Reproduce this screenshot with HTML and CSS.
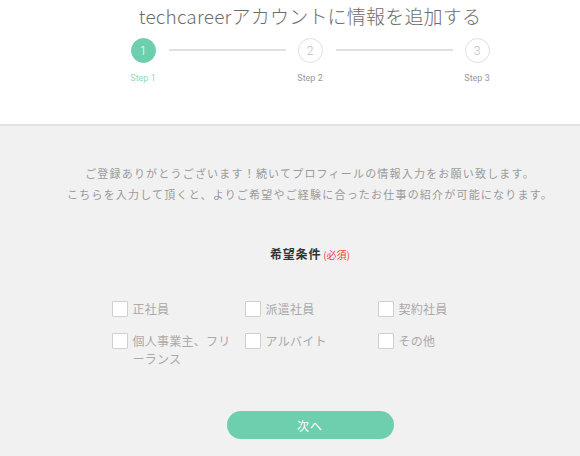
FILE: index.html
```html
<!DOCTYPE html>
<html lang="ja">
<head>
<meta charset="utf-8">
<title>techcareer</title>
<link rel="stylesheet" href="styles.css">
</head>
<body>
<header class="header">
  <h1 class="title">techcareerアカウントに情報を追加する</h1>
  <div class="steps">
    <div class="step is-active">
      <span class="step-circle">1</span>
      <span class="step-label">Step 1</span>
    </div>
    <span class="step-line"></span>
    <div class="step">
      <span class="step-circle">2</span>
      <span class="step-label">Step 2</span>
    </div>
    <span class="step-line"></span>
    <div class="step">
      <span class="step-circle">3</span>
      <span class="step-label">Step 3</span>
    </div>
  </div>
</header>
<main class="content">
  <p class="intro">ご登録ありがとうございます！続いてプロフィールの情報入力をお願い致します。<br>こちらを入力して頂くと、よりご希望やご経験に合ったお仕事の紹介が可能になります。</p>
  <h2 class="field-title">希望条件<span class="required">(必須)</span></h2>
  <div class="options">
    <label class="option"><span class="box"></span><span class="option-text">正社員</span></label>
    <label class="option"><span class="box"></span><span class="option-text">派遣社員</span></label>
    <label class="option"><span class="box"></span><span class="option-text">契約社員</span></label>
    <label class="option"><span class="box"></span><span class="option-text">個人事業主、フリーランス</span></label>
    <label class="option"><span class="box"></span><span class="option-text">アルバイト</span></label>
    <label class="option"><span class="box"></span><span class="option-text">その他</span></label>
  </div>
  <div class="actions">
    <button class="next" type="button">次へ</button>
  </div>
</main>
</body>
</html>
```
FILE: styles.css
```css
* { box-sizing: border-box; }
html, body {
  margin: 0;
  padding: 0;
  background: #f1f1f1;
  font-family: "Noto Sans CJK JP", "Noto Sans", sans-serif;
}
.header {
  background: #fff;
  height: 126px;
  border-bottom: 2px solid #e2e2e2;
  padding: 2px 0 0 40px;
}
.title {
  margin: 0;
  font-size: 19px;
  font-weight: 300;
  line-height: 28px;
  color: #6c6c6c;
  text-align: center;
  letter-spacing: 0.2px;
}
.steps {
  display: flex;
  align-items: flex-start;
  width: 359px;
  margin: 8px auto 0;
}
.step {
  display: flex;
  flex-direction: column;
  align-items: center;
  width: 25px;
}
.step-circle {
  width: 25px;
  height: 25px;
  border-radius: 50%;
  border: 1.5px solid #e0e0e0;
  background: #fff;
  color: #bbb;
  font-family: Roboto, "Noto Sans", sans-serif;
  font-weight: 300;
  font-size: 12px;
  display: flex;
  align-items: center;
  justify-content: center;
}
.step-label {
  margin-top: 10px;
  font-family: Roboto, "Noto Sans", sans-serif;
  font-size: 9px;
  line-height: 10px;
  color: #999;
  white-space: nowrap;
}
.is-active .step-circle {
  background: #6dcfae;
  border-color: #6dcfae;
  color: #fff;
}
.is-active .step-label { color: #8fd8bf; }
.step-line {
  flex: 1;
  height: 2px;
  background: #e0e0e0;
  margin: 11px 12px 0 13px;
}
.content {
  padding: 37px 0 0 40px;
}
.intro {
  margin: 0;
  text-align: center;
  font-size: 11px;
  line-height: 21px;
  letter-spacing: 1.2px;
  color: #9a9a9a;
}
.field-title {
  margin: 40px 0 0;
  text-align: center;
  font-size: 12px;
  line-height: 18px;
  font-weight: 700;
  color: #333;
  letter-spacing: 0.8px;
}
.required {
  font-size: 10px;
  font-weight: 400;
  color: #f04040;
  margin-left: 2px;
  letter-spacing: 0;
}
.options {
  display: grid;
  grid-template-columns: repeat(3, 133px);
  justify-content: center;
  row-gap: 14px;
  margin-top: 36px;
  padding-left: 2px;
}
.option {
  display: flex;
  align-items: flex-start;
  gap: 5px;
}
.box {
  flex: none;
  width: 16px;
  height: 16px;
  margin-top: 1px;
  background: #fff;
  border: 1px solid #cfcfcf;
  border-radius: 1px;
}
.option-text {
  max-width: 104px;
  font-size: 12px;
  line-height: 18px;
  letter-spacing: 0.25px;
  color: #aaa;
}
.actions {
  display: flex;
  justify-content: center;
  margin-top: 43px;
}
.next {
  width: 167px;
  height: 28px;
  border: none;
  border-radius: 14px;
  background: #6dcfae;
  color: #fff;
  font-family: "Noto Sans CJK JP", sans-serif;
  font-size: 12px;
  letter-spacing: 1px;
  padding: 0;
}
```
